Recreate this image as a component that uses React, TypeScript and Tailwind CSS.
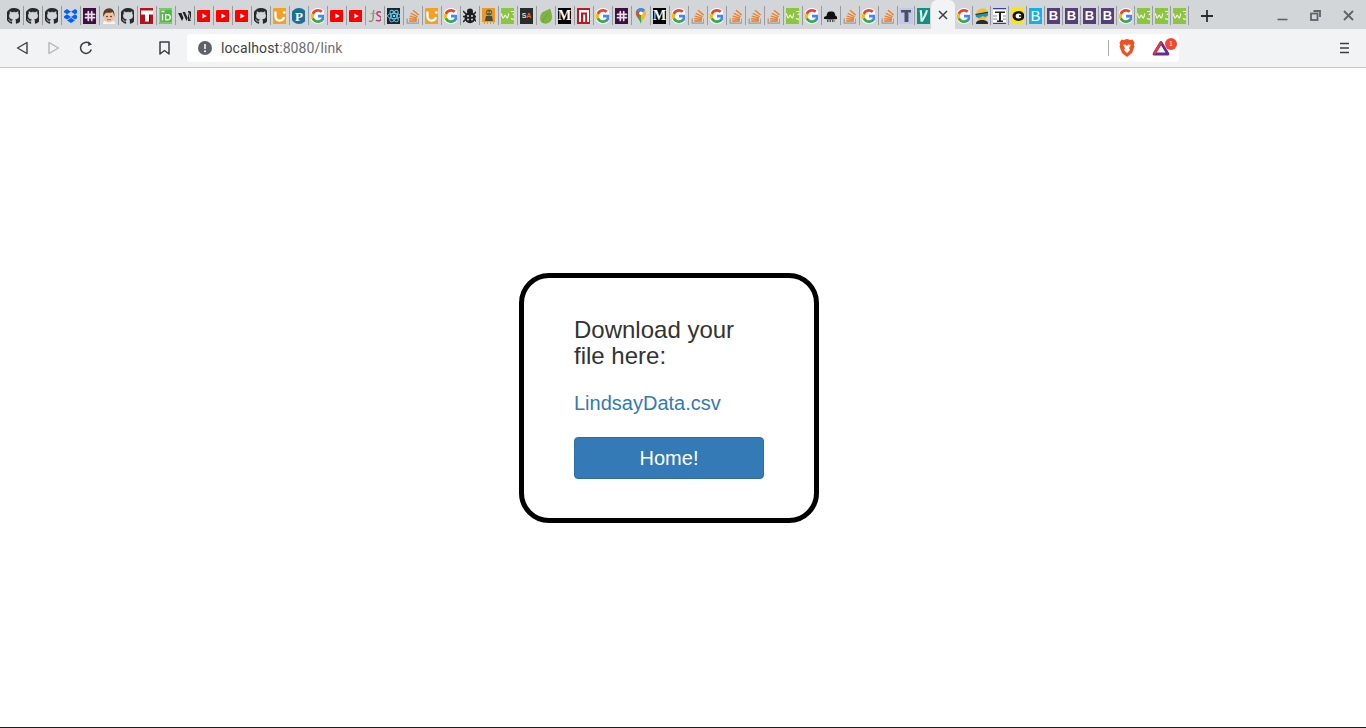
import React from "react";

const GitHub = () => (
  <svg viewBox="0 0 16 16" className="w-4 h-4 shrink-0"><path fill="#24292e" stroke="#24292e" strokeWidth=".3" d="M8 0C3.58 0 0 3.58 0 8c0 3.54 2.29 6.53 5.47 7.59.4.07.55-.17.55-.38 0-.19-.01-.82-.01-1.49-2.01.37-2.53-.49-2.69-.94-.09-.23-.48-.94-.82-1.13-.28-.15-.68-.52-.01-.53.63-.01 1.08.58 1.23.82.72 1.21 1.87.87 2.33.66.07-.52.28-.87.51-1.07-1.78-.2-3.64-.89-3.64-3.95 0-.87.31-1.59.82-2.15-.08-.2-.36-1.02.08-2.12 0 0 .67-.21 2.2.82.64-.18 1.32-.27 2-.27s1.36.09 2 .27c1.53-1.04 2.2-.82 2.2-.82.44 1.1.16 1.92.08 2.12.51.56.82 1.27.82 2.15 0 3.07-1.87 3.75-3.65 3.95.29.25.54.73.54 1.48 0 1.07-.01 1.93-.01 2.2 0 .21.15.46.55.38A8.01 8.01 0 0 0 16 8c0-4.42-3.58-8-8-8z"/></svg>
);
const Google = () => (
  <svg viewBox="0 0 16 16" className="w-4 h-4 shrink-0">
    <circle cx="8" cy="8" r="8" fill="#fff"/>
    <path fill="#4285F4" d="M14.700 8.200c0-.5 0-1-.1-1.400H8v2.700h3.800c-.2.900-.7 1.600-1.400 2.100v1.700h2.300c1.300-1.200 2-3 2-5.100z"/>
    <path fill="#34A853" d="M8 15c1.900 0 3.500-.6 4.700-1.700l-2.300-1.700c-.6.400-1.400.7-2.400.7-1.800 0-3.400-1.200-3.900-2.900H1.700v1.800C2.900 13.500 5.300 15 8 15z"/>
    <path fill="#FBBC05" d="M4.100 9.400c-.3-.9-.3-1.800 0-2.700V4.900H1.700c-1 2-1 4.300 0 6.300l2.400-1.800z"/>
    <path fill="#EA4335" d="M8 3.800c1 0 2 .4 2.700 1l2-2C11.400 1.700 9.800 1 8 1 5.300 1 2.900 2.600 1.700 4.900l2.400 1.800C4.600 5 6.200 3.800 8 3.800z"/>
  </svg>
);
const YouTube = () => (
  <svg viewBox="0 0 16 16" className="w-4 h-4 shrink-0"><rect x="0" y="2" width="16" height="12" rx="3" fill="#f00"/><path d="M6.400 5.400v5.200L10.800 8z" fill="#fff"/></svg>
);
const Dropbox = () => (
  <svg viewBox="0 0 16 16" className="w-4 h-4 shrink-0"><path fill="#0061ff" d="M4 1 0 3.700l4 2.600 4-2.600zM12 1 8 3.700l4 2.600 4-2.600zM0 9l4 2.600L8 9 4 6.300zM12 6.300 8 9l4 2.600L16 9zM4 12.400l4 2.600 4-2.600L8 9.700z"/></svg>
);
const Slack = () => (
  <svg viewBox="0 0 16 16" className="w-4 h-4 shrink-0"><rect width="16" height="16" fill="#3f0e40"/><g stroke="#e8dde8" strokeWidth="1.700" strokeLinecap="round"><path d="M3.500 6.300h9M3.500 9.700h9M6.300 3.500v9M9.700 3.500v9"/></g></svg>
);
const Avatar = () => (
  <svg viewBox="0 0 16 16" className="w-4 h-4 shrink-0"><path d="M2 16c0-3 2-4 6-4s6 1 6 4z" fill="#f4f4f4"/><ellipse cx="8" cy="8.500" rx="5.500" ry="6" fill="#f3c19d"/><path d="M2.300 9C1.500 3 4.500.300 8.300.300c3.500 0 5.700 3 5.100 8.700-.6-2.500-1-4.400-1.900-5-2 1-5 1-6.500.7C4 5.500 3 7 2.300 9z" fill="#5a3a26"/><circle cx="6" cy="8.500" r=".8" fill="#222"/><circle cx="10" cy="8.500" r=".8" fill="#222"/><path d="M6 11.700h4" stroke="#a3553c" strokeWidth=".9"/></svg>
);
const RedT = () => (
  <svg viewBox="0 0 16 16" className="w-4 h-4 shrink-0"><rect width="16" height="16" fill="#b5121b"/><path d="M2 2.500h12v4H10v7H6v-7H2z" fill="#fff"/><path d="M10 7v7h1V7.500z" fill="#700"/></svg>
);
const TD = () => (
  <svg viewBox="0 0 16 16" className="w-4 h-4 shrink-0"><rect width="16" height="16" fill="#54b848"/><rect x="1.800" y="1" width="12.400" height="14" fill="none" stroke="#cfe9cb" strokeWidth=".6"/><path d="M3.500 3.500h3M4.500 6v6.500" stroke="#fff" strokeWidth="1.300"/><path d="M7 6h2.500c2.300 0 3.500 1.300 3.500 3.200s-1.200 3.300-3.500 3.300H7zM8.300 7.200v4.100h1.100c1.400 0 2.200-.8 2.200-2.100S10.800 7.200 9.400 7.200z" fill="#fff" fillRule="evenodd"/></svg>
);
const VV = () => (
  <svg viewBox="0 0 16 16" className="w-4 h-4 shrink-0"><path d="M1 5 5 13 6.500 10 4.500 5zM5.500 4l4 9 1.200-3-2.700-6zM11 3v10h1.500l2.500-1-1-8.500z" fill="#222"/><path d="M11.500 4.500l2 7.500" stroke="#eee" strokeWidth=".8"/></svg>
);
const UIcon = () => (
  <svg viewBox="0 0 16 16" className="w-4 h-4 shrink-0"><rect width="16" height="16" rx="3" fill="#f59f23"/><path d="M3.500 3.500v5a4.300 4.300 0 0 0 8.500.6" fill="none" stroke="#fff" strokeWidth="2.300"/><circle cx="12.200" cy="4.400" r="1.400" fill="#fff"/></svg>
);
const PIcon = () => (
  <svg viewBox="0 0 16 16" className="w-4 h-4 shrink-0"><circle cx="8" cy="8" r="8" fill="#1a6f96"/><text x="8" y="12.500" textAnchor="middle" fontFamily="Liberation Serif, serif" fontSize="13" fontWeight="700" fill="#fff">P</text></svg>
);
const JS = () => (
  <svg viewBox="0 0 16 16" className="w-4 h-4 shrink-0"><path d="M7 2C6 3 6.500 8 6 11c-.3 2-2 3-4 2" fill="none" stroke="#a08a5a" strokeWidth="1.400"/><path d="M3.500 5.500h5" stroke="#93b070" strokeWidth="1.100"/><path d="M14 4.500C12 3 9.500 4 10 6s4.500 2 4.300 4.500-3.300 3-5.300 1.500" fill="none" stroke="#b8406e" strokeWidth="1.500"/></svg>
);
const ReactIcon = () => (
  <svg viewBox="0 0 16 16" className="w-4 h-4 shrink-0"><rect width="16" height="16" fill="#20232a"/><g fill="none" stroke="#61dafb" strokeWidth=".9"><ellipse cx="8" cy="8" rx="6.500" ry="2.700"/><ellipse cx="8" cy="8" rx="6.500" ry="2.700" transform="rotate(60 8 8)"/><ellipse cx="8" cy="8" rx="6.500" ry="2.700" transform="rotate(120 8 8)"/></g><circle cx="8" cy="8" r="1.300" fill="#61dafb"/></svg>
);
const SO = () => (
  <svg viewBox="0 0 16 16" className="w-4 h-4 shrink-0"><path d="M2.200 10.500v4.600h11.600v-4.600" fill="none" stroke="#9c9c9c" strokeWidth="1.300"/><g stroke="#ee7a1e" strokeWidth="1.300" fill="none"><path d="M4.200 13h7.600M4.200 10.600l7.600.9M4.600 8l7.400 2.200M5.800 5.200l6.800 3.600M8 2.300l5.600 4.800"/></g></svg>
);
const Bug = () => (
  <svg viewBox="0 0 16 16" className="w-4 h-4 shrink-0"><g stroke="#1d1d20" strokeWidth="1.500"><path d="M1 3l3 3M15 3l-3 3M0 8.500h3M16 8.500h-3M1 14l3-3M15 14l-3-3"/></g><circle cx="8" cy="3.500" r="3" fill="#1d1d20"/><ellipse cx="8" cy="9.500" rx="5.500" ry="5.800" fill="#1d1d20"/><circle cx="6" cy="8" r="1" fill="#d3d6d9"/><circle cx="10" cy="8" r="1" fill="#d3d6d9"/><circle cx="6" cy="11.500" r="1" fill="#d3d6d9"/><circle cx="10" cy="11.500" r="1" fill="#d3d6d9"/></svg>
);
const Figure = () => (
  <svg viewBox="0 0 16 16" className="w-4 h-4 shrink-0"><rect width="16" height="16" fill="#ee9622"/><circle cx="8" cy="4.500" r="3" fill="#6a5a2a"/><circle cx="6.900" cy="4.200" r=".6" fill="#fff"/><circle cx="9.200" cy="4.200" r=".6" fill="#fff"/><path d="M5 8h6l1 5H4z" fill="#4a4a3a"/><path d="M1 15h14" stroke="#fff" strokeWidth="1.200" strokeDasharray="2 1"/></svg>
);
const W3 = () => (
  <svg viewBox="0 0 16 16" className="w-4 h-4 shrink-0"><rect width="16" height="16" fill="#8cc63f"/><path d="M1.500 5.500c.5 2.500 1 4.500 1.800 4.500s1.200-3 1.900-3 1 3 1.900 3 1.200-2.500 1.700-4.500" fill="none" stroke="#fff" strokeWidth="1.100"/><path d="M11 3.500h5l-2.500 3c2 0 2.800 1.300 2.500 2.900-.4 1.900-3 2.400-5 1.100" fill="none" stroke="#fff" strokeWidth="1.100"/></svg>
);
const SA = () => (
  <div className="w-4 h-4 shrink-0 bg-[#2b2b2b] flex items-center justify-center text-[7px] font-bold leading-none text-[#ddd] font-['Liberation_Sans',sans-serif]">S<span className="text-[#e8702a]">A</span></div>
);
const Leaf = () => (
  <svg viewBox="0 0 16 16" className="w-4 h-4 shrink-0"><path d="M12 .5C14 5 15 10.500 12.500 13.500 10 16 6 16.300 3.800 14.500 1.500 12.500 1.700 8 3.500 5.500 5.800 2.500 9 2.500 12 .5z" fill="#7cb342"/><path d="M4.500 14.500C6 10 8 7 10.500 5" fill="none" stroke="#689f38" strokeWidth=".8"/></svg>
);
const Medium = () => (
  <div className="w-4 h-4 shrink-0 bg-black flex items-center justify-center text-[14px] font-bold leading-none text-white font-['Liberation_Serif',serif]">M</div>
);
const RedN = () => (
  <svg viewBox="0 0 16 16" className="w-4 h-4 shrink-0"><rect width="16" height="16" fill="#c4161c"/><rect x="3" y="2" width="10" height="12" fill="#fff"/><path d="M5 14V4.500h6V14H9.200V6.500H7.200V14z" fill="#c4161c"/></svg>
);
const Maps = () => (
  <svg viewBox="0 0 16 16" className="w-4 h-4 shrink-0"><path d="M8 0C5 0 2.800 2.300 2.800 5.200c0 3.800 3.800 5.800 5.200 10.800z" fill="#34a853"/><path d="M8 0c3 0 5.200 2.300 5.200 5.200 0 3.800-3.800 5.800-5.200 10.800z" fill="#fbbc05"/><path d="M3.500 2.500 8 7 5.500 9.500C3.800 7.500 2.200 5.500 3.500 2.500z" fill="#ea4335"/><path d="M4 2C5 .800 6.400 0 8 0c1.700 0 3.200.800 4.100 2L8 6z" fill="#4285f4"/><circle cx="8" cy="5.200" r="1.800" fill="#fff"/></svg>
);
const TBlue = () => (
  <svg viewBox="0 0 16 16" className="w-4 h-4 shrink-0"><rect x="1" width="14" height="16" fill="#c3c8ea"/><path d="M3 2h10v2.500H10V14H6.500V4.500H3z" fill="#4a5060"/><path d="M10.500 5v9" stroke="#8f94ad" strokeWidth="1"/></svg>
);
const VTeal = () => (
  <svg viewBox="0 0 16 16" className="w-4 h-4 shrink-0"><rect width="16" height="16" fill="#11907f"/><path d="M4.500 2.500c1 3 .5 8 1 11l2 .5c2-3 4.500-7 5.500-11.500l-2-.5C10 5 8.500 8 7.500 10.500 7.400 8 7.200 5 6.800 2z" fill="#dff3ef"/></svg>
);
const Hat = () => (
  <svg viewBox="0 0 16 16" className="w-4 h-4 shrink-0"><path d="M3.500 8C4 4 5.500 3 8 3.500 10.500 3 12 4 12.500 8c2 .5 3.500 1.200 3.500 2 0 1-3.500 1.500-8 1.500S0 11 0 10c0-.8 1.500-1.500 3.500-2z" fill="#111"/><path d="M4 13h8" stroke="#555" strokeWidth="1.800" strokeDasharray="1.500 1"/></svg>
);
const Goggle = () => (
  <svg viewBox="0 0 16 16" className="w-4 h-4 shrink-0"><path d="M2 16c0-3 2-4 6-4s6 1 6 4z" fill="#2b2b2b"/><path d="M2 7C2 3 5 .5 9 .5c3 0 5 2 5 5 0 4-2.500 6.500-6 6.500C5 12 2 10 2 7z" fill="#f3c11f"/><path d="M1.500 6.500 15 4l.5 2.500-4 2.500-3-1-3 2L2 9z" fill="#1a8fd1"/><path d="M1.500 6.500 15 4" stroke="#222" strokeWidth="1"/></svg>
);
const TScale = () => (
  <svg viewBox="0 0 16 16" className="w-4 h-4 shrink-0"><rect width="16" height="16" fill="#fff"/><path d="M0 .6h16M0 15.400h16" stroke="#3a3ab8" strokeWidth="1.200"/><path d="M3 3.500h10v1.500H9v7.500h2V14H5v-1.500h2V5H3z" fill="#222"/><path d="M1 8h4M11 8h4M1 11h4M11 11h4" stroke="#666" strokeWidth=".8"/></svg>
);
const Yellow = () => (
  <svg viewBox="0 0 16 16" className="w-4 h-4 shrink-0"><rect width="16" height="16" fill="#ffe600"/><ellipse cx="8.500" cy="8" rx="6" ry="5" fill="#111"/><ellipse cx="8.500" cy="8" rx="3" ry="2.500" fill="#fff"/><path d="M9 8h6" stroke="#111" strokeWidth="1.500"/></svg>
);
const BCyan = () => (
  <div className="w-4 h-4 shrink-0 bg-[#14aeea] flex items-center justify-center text-[15px] leading-none text-white font-['Liberation_Sans',sans-serif]">B</div>
);
const BS = () => (
  <div className="w-4 h-4 shrink-0 bg-[#563d7c] flex items-center justify-center text-[13px] font-bold leading-none text-white font-['Liberation_Sans',sans-serif]">B</div>
);

const leftTabs = [
  GitHub, GitHub, GitHub, Dropbox, Slack, Avatar, GitHub, RedT, TD, VV, YouTube, YouTube, YouTube, GitHub, UIcon, PIcon, Google, YouTube, YouTube, JS,
  ReactIcon, SO, UIcon, Google, Bug, Figure, W3, SA, Leaf, Medium, RedN, Google, Slack, Maps, Medium, Google, SO, Google, SO, SO, SO, W3, Google, Hat, SO, Google, SO,
];
const narrowTabs = [TBlue, VTeal];
const rightTabs = [Google, Goggle, TScale, Yellow, BCyan, BS, BS, BS, BS, Google, W3, W3, W3];

const Favicon = ({ Icon }: { Icon: React.ComponentType }) => (
  <div className="w-[13.5px] h-4 overflow-hidden flex justify-center">
    <Icon />
  </div>
);

export default function App() {
  return (
    <div className="min-h-[728px] flex flex-col bg-white font-['Liberation_Sans',Arial,sans-serif] border-b border-[#1c1c1c]">
      <div className="h-[29px] bg-[#d3d6d9] flex items-start shrink-0 pl-[4.5px] pt-[6px]">
        {leftTabs.map((I, i) => (
          <div key={i} className="w-[19px] h-[19px] shrink-0 flex items-center justify-center border-r border-[#9a9c9f]">
            <Favicon Icon={I} />
          </div>
        ))}
        {narrowTabs.map((I, i) => (
          <div key={i} className="w-[17.5px] h-[19px] shrink-0 flex items-center justify-center border-r border-[#9a9c9f]">
            <Favicon Icon={I} />
          </div>
        ))}
        <div className="relative -mt-[6px] h-[29px] w-[24px] shrink-0 ml-[-1.5px] rounded-t-[6px] bg-[#f1f3f4] flex items-center justify-center">
          <svg viewBox="0 0 10 10" className="w-[10px] h-[10px]"><path d="M1 1l8 8M9 1l-8 8" stroke="#3c4043" strokeWidth="1.500" /></svg>
        </div>
        <div className="flex">
          {rightTabs.map((I, i) => (
            <div key={i} className="w-[18px] h-[19px] shrink-0 flex items-center justify-center border-r border-[#9a9c9f]">
              <Favicon Icon={I} />
            </div>
          ))}
        </div>
        <div className="ml-[12px] h-[19px] flex items-center">
          <svg viewBox="0 0 12 12" className="w-3 h-3"><path d="M6 0v12M0 6h12" stroke="#2b2e31" strokeWidth="1.800" /></svg>
        </div>
        <div className="ml-auto flex items-start h-[19px] pr-[12px] gap-[22px] pt-[4px]">
          <svg viewBox="0 0 11 11" className="w-[11px] h-[11px]"><path d="M0.500 9.500h10" stroke="#5f6368" strokeWidth="1.600" /></svg>
          <svg viewBox="0 0 11 11" className="w-[11px] h-[11px]"><path d="M3.500 1h6.500v6" fill="none" stroke="#5f6368" strokeWidth="1.800" /><rect x="1" y="3.500" width="6.500" height="6.500" fill="none" stroke="#5f6368" strokeWidth="1.800" /></svg>
          <svg viewBox="0 0 11 11" className="w-[11px] h-[11px]"><path d="M1 1l9 9M10 1l-9 9" stroke="#5f6368" strokeWidth="1.800" /></svg>
        </div>
      </div>

      <div className="h-[39px] bg-[#f1f3f4] border-b border-[#c6c8ca] flex items-center shrink-0">
        <div className="w-[187px] flex items-center shrink-0 pl-[16px]">
          <svg viewBox="0 0 12 14" className="w-[12px] h-[14px]"><path d="M11 1.500v11L1.500 7z" fill="none" stroke="#3c4043" strokeWidth="1.400" strokeLinejoin="round" /></svg>
          <svg viewBox="0 0 12 14" className="w-[12px] h-[14px] ml-[20px]"><path d="M1 1.500v11L10.500 7z" fill="none" stroke="#b4b6b8" strokeWidth="1.400" strokeLinejoin="round" /></svg>
          <svg viewBox="0 0 14 14" className="w-[14px] h-[14px] ml-[19px]"><path d="M12.300 8.500A5.500 5.500 0 1 1 10.500 2.600" fill="none" stroke="#3c4043" strokeWidth="1.500" /><path d="M9.500 0.300 13 3.500 9 5z" fill="#3c4043" /></svg>
          <svg viewBox="0 0 11 14" className="w-[11px] h-[14px] ml-[66px]"><path d="M1 1h9v12L5.500 9.500 1 13z" fill="none" stroke="#3c4043" strokeWidth="1.500" strokeLinejoin="round" /></svg>
        </div>
        <div className="w-[992px] h-[28px] bg-white rounded-[4px] flex items-center shrink-0 pl-[11px]">
          <svg viewBox="0 0 14 14" className="w-[14px] h-[14px]"><circle cx="7" cy="7" r="7" fill="#5f6368" /><path d="M7 3v5" stroke="#fff" strokeWidth="1.500" /><circle cx="7" cy="10.300" r="1" fill="#fff" /></svg>
          <div className="ml-[9px] text-[14px] leading-none text-[#3c4043] font-['Roboto',sans-serif] tracking-[0.1px]">
            localhost<span className="text-[#6b6f73]">:8080/link</span>
          </div>
          <div className="ml-auto w-px h-[16px] bg-[#a8aaad]" />
          <svg viewBox="0 0 16 18" className="w-[16px] h-[18px] ml-[10px]"><path d="M8 0l3.500 1 2-.5 2 3-.7 2.500.7 1.500L13 14l-5 4-5-4L.500 7.500 1.200 6 .500 3.500l2-3 2 .5z" fill="#f1501f" /><path d="M4 6l2.500-.5L8 7l1.500-1.500L12 6l-2 3 1 2-3 3-3-3 1-2z" fill="#fff" /></svg>
          <div className="relative ml-[17px] mr-[9px] w-[18px] h-[16px]">
            <svg viewBox="0 0 18 16" className="w-[18px] h-[16px]"><path d="M9 2.500 2 14h14z" fill="none" stroke="#662d91" strokeWidth="2.800" strokeLinejoin="round" /><path d="M9 2.500 2 14" stroke="#e0383e" strokeWidth="2.800" fill="none" /></svg>
            <div className="absolute -top-[2px] -right-[7px] w-[12px] h-[12px] rounded-full bg-[#f4472b] text-white text-[7px] leading-[12px] text-center">1</div>
          </div>
        </div>
        <div className="ml-auto mr-[16px]">
          <svg viewBox="0 0 11 12" className="w-[11px] h-[12px]"><path d="M1 1.500h9M1 6h9M1 10.500h9" stroke="#3c4043" strokeWidth="1.500" /></svg>
        </div>
      </div>

      <div className="flex-1 flex items-center justify-center bg-white">
        <div className="w-[300px] h-[250px] mr-[28px] border-[5px] border-black rounded-[30px] pt-[39px] px-[50px] bg-white">
          <h3 className="text-[24px] leading-[26.4px] text-[#333] font-medium">Download your file here:</h3>
          <a href="#" className="block mt-[20px] text-[20px] leading-[28.6px] text-[#337ab7]">LindsayData.csv</a>
          <button className="mt-[19px] w-[190px] h-[42px] bg-[#337ab7] border border-[#2e6da4] rounded-[4px] text-white text-[20px]">Home!</button>
        </div>
      </div>
    </div>
  );
}
